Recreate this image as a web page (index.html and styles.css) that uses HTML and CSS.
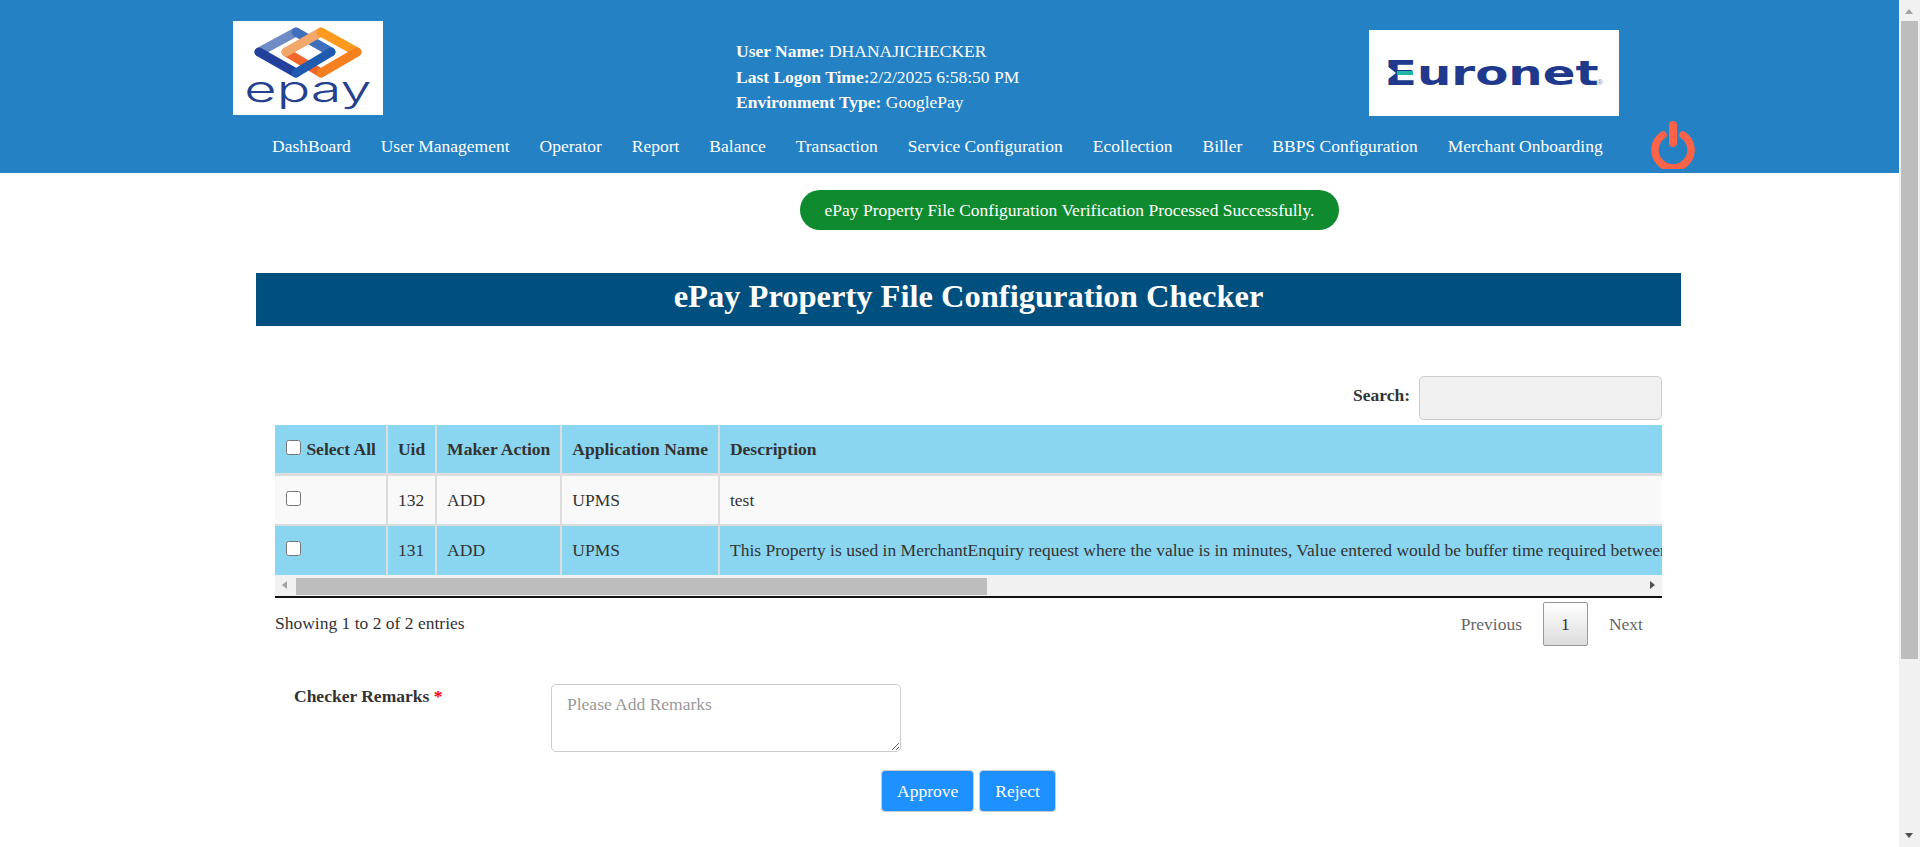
FILE: index.html
```html
<!DOCTYPE html>
<html lang="en">
<head>
  <meta charset="UTF-8" />
  <meta name="viewport" content="width=device-width, initial-scale=1" />
  <title>ePay Property File Configuration Checker</title>
  <link rel="stylesheet" href="styles.css">
</head>
<body>
<div class="page">
  <div class="main">

    <!-- Header -->
    <header class="header">
      <div class="header-top">
        <div class="logo-epay">
          <svg width="150" height="66" viewBox="0 0 150 66">
            <line x1="53" y1="31" x2="88" y2="52" stroke="#f0662a" stroke-width="9" stroke-linecap="round"/>
            <line x1="26" y1="31" x2="63" y2="11" stroke="#6f8cc6" stroke-width="9" stroke-linecap="round"/>
            <line x1="63" y1="11" x2="98" y2="31" stroke="#3f6fbd" stroke-width="9" stroke-linecap="round"/>
            <line x1="26" y1="31" x2="63" y2="52" stroke="#22409c" stroke-width="9" stroke-linecap="round"/>
            <line x1="63" y1="52" x2="98" y2="31" stroke="#1f5bb0" stroke-width="9" stroke-linecap="round"/>
            <line x1="53" y1="31" x2="88" y2="11" stroke="#f4a76b" stroke-width="9" stroke-linecap="round"/>
            <line x1="88" y1="11" x2="124" y2="31" stroke="#fb9a1e" stroke-width="9" stroke-linecap="round"/>
            <line x1="124" y1="31" x2="88" y2="52" stroke="#f67f20" stroke-width="9" stroke-linecap="round"/>
          </svg>
          <span class="epay-word">epay</span>
        </div>
        <div class="user-info">
          <div><b>User Name:</b> DHANAJICHECKER</div>
          <div><b>Last Logon Time:</b>2/2/2025 6:58:50 PM</div>
          <div><b>Environment Type:</b> GooglePay</div>
        </div>
        <div class="logo-euronet">
          <span class="euronet-word">Euronet</span>
          <span class="euronet-notch"></span>
          <span class="euronet-bar"></span>
          <span class="euronet-reg">®</span>
        </div>
      </div>
      <nav class="nav">
        <a href="#">DashBoard</a>
        <a href="#">User Management</a>
        <a href="#">Operator</a>
        <a href="#">Report</a>
        <a href="#">Balance</a>
        <a href="#">Transaction</a>
        <a href="#">Service Configuration</a>
        <a href="#">Ecollection</a>
        <a href="#">Biller</a>
        <a href="#">BBPS Configuration</a>
        <a href="#">Merchant Onboarding</a>
        <svg class="power" width="44" height="48" viewBox="0 0 44 48">
          <path d="M12 14 A 18 18 0 1 0 32 14" fill="none" stroke="#ff6347" stroke-width="7.5" stroke-linecap="round"/>
          <line x1="22" y1="4" x2="22" y2="22" stroke="#ff6347" stroke-width="8" stroke-linecap="round"/>
        </svg>
      </nav>
    </header>

    <!-- Page content -->
    <div class="alert">ePay Property File Configuration Verification Processed Successfully.</div>

    <div class="content">
      <h1 class="title">ePay Property File Configuration Checker</h1>

      <div class="panel">
        <div class="search-row">
          <label for="search">Search:</label>
          <input type="text" id="search" />
        </div>

        <div class="table-wrap">
          <table class="grid">
            <thead>
              <tr>
                <th class="col-check"><input type="checkbox" /> Select All</th>
                <th class="col-uid">Uid</th>
                <th class="col-action">Maker Action</th>
                <th class="col-app">Application Name</th>
                <th>Description</th>
              </tr>
            </thead>
            <tbody>
              <tr class="row-light">
                <td><input type="checkbox" /></td>
                <td>132</td>
                <td>ADD</td>
                <td>UPMS</td>
                <td>test</td>
              </tr>
              <tr class="row-blue">
                <td><input type="checkbox" /></td>
                <td>131</td>
                <td>ADD</td>
                <td>UPMS</td>
                <td>This Property is used in MerchantEnquiry request where the value is in minutes, Value entered would be buffer time required between</td>
              </tr>
            </tbody>
          </table>
        </div>

        <div class="hscroll">
          <span class="arrow-left"></span>
          <span class="hscroll-thumb"></span>
          <span class="arrow-right"></span>
        </div>

        <div class="table-foot">
          <div class="table-info">Showing 1 to 2 of 2 entries</div>
          <div class="pager">
            <a href="#" class="page-link">Previous</a>
            <a href="#" class="page-current">1</a>
            <a href="#" class="page-link">Next</a>
          </div>
        </div>
      </div>

      <form class="remarks">
        <label for="remarks">Checker Remarks <span class="req">*</span></label>
        <textarea id="remarks" placeholder="Please Add Remarks"></textarea>
      </form>
      <div class="actions">
        <button type="button" class="btn">Approve</button>
        <button type="button" class="btn">Reject</button>
      </div>
    </div>
  </div>

  <!-- Window scrollbar -->
  <div class="vscroll">
    <span class="arrow-up"></span>
    <span class="vscroll-thumb"></span>
    <span class="arrow-down"></span>
  </div>
</div>
</body>
</html>
```

FILE: styles.css
```css
html, body {
  margin: 0;
  height: 847px;
  overflow: hidden;
  background: #fff;
}
body {
  font-family: "Liberation Serif", "Times New Roman", serif;
  font-size: 17.5px;
  color: #333;
}
.page {
  display: flex;
  height: 847px;
}
.main {
  flex: 1;
  min-width: 0;
}

/* header */
.header {
  background: #2481c4;
  height: 173px;
  color: #fff;
}
.header-top {
  display: flex;
  padding: 21px 0 0 233px;
  height: 95px;
}
.logo-epay {
  flex: none;
  width: 150px;
  height: 94px;
  background: #fff;
  overflow: hidden;
  position: relative;
}
.logo-epay svg {
  display: block;
}
.epay-word {
  position: absolute;
  left: 14px;
  top: 46px;
  width: 122px;
  text-align: center;
  font-family: "Inter", sans-serif;
  font-weight: 300;
  font-size: 36px;
  line-height: 44px;
  color: #24408e;
  transform: scaleX(1.55);
}
.user-info {
  flex: none;
  margin-left: 353px;
  width: 633px;
  padding-top: 18px;
  line-height: 25.5px;
}
.logo-euronet {
  flex: none;
  width: 250px;
  height: 86px;
  margin-top: 9px;
  background: #fff;
  position: relative;
  overflow: hidden;
}
.euronet-word {
  position: absolute;
  left: 15px;
  top: 21px;
  font-family: "DejaVu Sans", sans-serif;
  font-weight: 700;
  font-size: 34px;
  line-height: 44px;
  color: #20398d;
  transform: scaleX(1.42);
  transform-origin: left center;
}
.euronet-notch {
  position: absolute;
  left: 18px;
  top: 36px;
  border-left: 9px solid #fff;
  border-top: 7px solid transparent;
  border-bottom: 7px solid transparent;
}
.euronet-bar {
  position: absolute;
  left: 28px;
  top: 41px;
  width: 16px;
  height: 4px;
  background: #1fb8a8;
}
.euronet-reg {
  position: absolute;
  left: 228px;
  top: 48px;
  font-family: "Liberation Sans", sans-serif;
  font-size: 8px;
  color: #6f7fb5;
}
.nav {
  display: flex;
  align-items: center;
  gap: 30px;
  padding-left: 272px;
  height: 57px;
  position: relative;
}
.nav a {
  color: #fff;
  text-decoration: none;
  white-space: nowrap;
  padding-top: 3px;
}
.nav .power {
  margin-left: 18px;
}

/* message */
.alert {
  width: 539px;
  height: 40px;
  margin: 17px 0 0 800px;
  border-radius: 20px;
  background: #0f8a2f;
  color: #fff;
  text-align: center;
  line-height: 41px;
}

.content {
  padding: 0 218px 0 256px;
}
.title {
  margin: 43px 0 0;
  height: 53px;
  line-height: 47px;
  background: #00507f;
  color: #fff;
  font-size: 32.5px;
  text-align: center;
}
.panel {
  padding: 0 19px;
}

/* search */
.search-row {
  display: flex;
  justify-content: flex-end;
  gap: 9px;
  margin-top: 50px;
  height: 44px;
}
.search-row label {
  font-weight: bold;
  line-height: 38px;
}
.search-row input {
  box-sizing: border-box;
  width: 243px;
  height: 44px;
  background: #f0f0f0;
  border: 1px solid #ccc;
  border-radius: 5px;
}

/* table */
.table-wrap {
  margin-top: 5px;
  overflow: hidden;
}
.grid {
  border-collapse: separate;
  border-spacing: 0;
  white-space: nowrap;
}
.grid th, .grid td {
  text-align: left;
  padding: 0 10px;
  border-right: 2px solid #ddd;
}
.grid th {
  height: 48px;
  background: #8ad6f0;
  border-bottom: 3px solid #ddd;
}
.grid td {
  height: 48px;
  border-bottom: 2px solid #ddd;
}
.grid td:last-child, .grid th:last-child {
  border-right: 0;
}
.grid th:last-child {
  width: 1200px;
}
.grid input {
  width: 15px;
  height: 15px;
  margin: 0 1px 0 1px;
  vertical-align: 0;
}
.row-light td { background: #f9f9f9; }
.row-blue td { background: #8ad6f0; }
.row-blue td { border-bottom: 0; height: 49px; }

.hscroll {
  display: flex;
  align-items: center;
  height: 21px;
  background: #f1f1f1;
  border-bottom: 2px solid #111;
  position: relative;
}
.hscroll-thumb {
  position: absolute;
  left: 21px;
  top: 3px;
  width: 691px;
  height: 17px;
  background: #bdbdbd;
}
.arrow-left, .arrow-right {
  position: absolute;
  top: 6px;
  border-top: 4px solid transparent;
  border-bottom: 4px solid transparent;
}
.arrow-left {
  left: 7px;
  border-right: 5px solid #a3a3a3;
}
.arrow-right {
  right: 7px;
  border-left: 5px solid #505050;
}

.table-foot {
  display: flex;
  justify-content: space-between;
  align-items: center;
  margin-top: 4px;
  height: 44px;
}
.table-info {
  padding-bottom: 2px;
}
.pager {
  display: flex;
  align-items: center;
  padding-right: 19px;
}
.page-link {
  color: #666;
  text-decoration: none;
}
.page-current {
  box-sizing: border-box;
  width: 45px;
  height: 44px;
  line-height: 42px;
  margin: 0 21px;
  text-align: center;
  color: #333;
  text-decoration: none;
  border: 1px solid #979797;
  border-radius: 2px;
  background: linear-gradient(#fff, #dcdcdc);
}

/* remarks */
.remarks {
  display: flex;
  margin-top: 38px;
  padding-left: 38px;
}
.remarks label {
  width: 257px;
  font-weight: bold;
  padding-top: 2px;
}
.req {
  color: #f00;
}
.remarks textarea {
  box-sizing: border-box;
  width: 350px;
  height: 68px;
  padding: 9px 15px;
  font-family: inherit;
  font-size: 17.5px;
  border: 1px solid #ccc;
  border-radius: 5px;
}
.remarks textarea::placeholder {
  color: #999;
}
.actions {
  display: flex;
  gap: 5px;
  margin: 18px 0 0 625px;
}
.btn {
  box-sizing: border-box;
  height: 42px;
  padding: 0 15px;
  font-family: inherit;
  font-size: 17.5px;
  color: #fff;
  background: #1e90ff;
  border: 1px solid #ccc;
  border-radius: 4px;
}

/* window scrollbar */
.vscroll {
  width: 21px;
  position: relative;
  background: #f1f1f1;
}
.vscroll-thumb {
  position: absolute;
  left: 2px;
  top: 21px;
  width: 17px;
  height: 638px;
  background: #bdbdbd;
}
.arrow-up, .arrow-down {
  position: absolute;
  left: 6px;
  border-left: 4.5px solid transparent;
  border-right: 4.5px solid transparent;
}
.arrow-up {
  top: 9px;
  border-bottom: 5px solid #a3a3a3;
}
.arrow-down {
  bottom: 9px;
  border-top: 5px solid #505050;
}
```
